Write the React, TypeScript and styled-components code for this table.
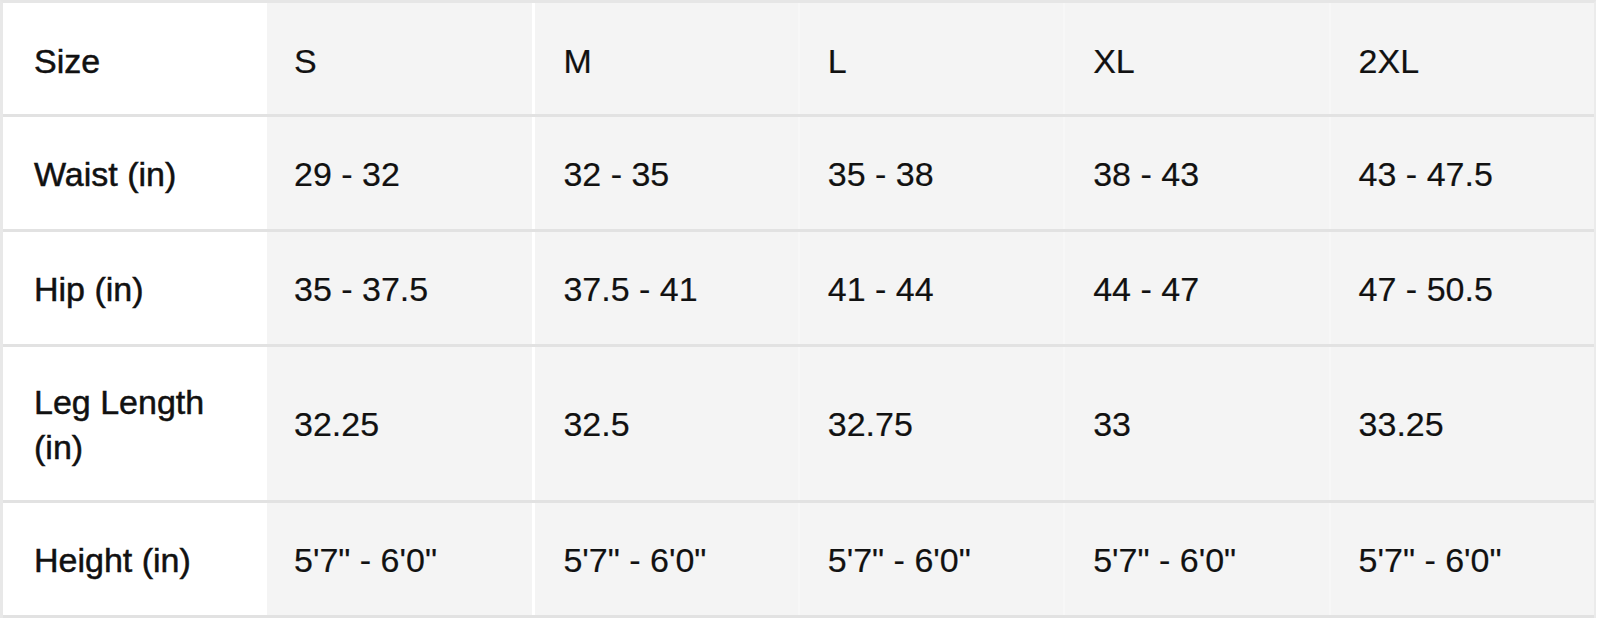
import styled, { createGlobalStyle } from "styled-components";

const GlobalStyle = createGlobalStyle`
  html, body {
    margin: 0;
    padding: 0;
    background: #ffffff;
  }
  body {
    font-family: "Liberation Sans", Arial, Helvetica, sans-serif;
    color: #111111;
  }
`;

const sizes = ["S", "M", "L", "XL", "2XL"];

const rows = [
  { label: "Waist (in)", height: 112, values: ["29 - 32", "32 - 35", "35 - 38", "38 - 43", "43 - 47.5"] },
  { label: "Hip (in)", height: 112, values: ["35 - 37.5", "37.5 - 41", "41 - 44", "44 - 47", "47 - 50.5"] },
  { label: "Leg Length (in)", height: 153, values: ["32.25", "32.5", "32.75", "33", "33.25"] },
  { label: "Height (in)", height: 112, values: [`5'7" - 6'0"`, `5'7" - 6'0"`, `5'7" - 6'0"`, `5'7" - 6'0"`, `5'7" - 6'0"`] },
];

export default function App() {
  return (
    <>
      <GlobalStyle />
      <Table>
        <Row $height={111} $shift={5}>
          <LabelCell>Size</LabelCell>
          {sizes.map((s, i) => (
            <DataCell key={s} $first={i === 0} $bright={i === 1}>
              {s}
            </DataCell>
          ))}
        </Row>
        {rows.map((row) => (
          <Row key={row.label} $height={row.height} $shift={2}>
            <LabelCell>{row.label}</LabelCell>
            {row.values.map((v, i) => (
              <DataCell key={i} $first={i === 0} $bright={i === 1}>
                {v}
              </DataCell>
            ))}
          </Row>
        ))}
      </Table>
    </>
  );
}

const Table = styled.div`
  width: 1596px;
  box-sizing: border-box;
  border-top: 3px solid #e6e6e6;
  border-left: 3px solid #e8e8e8;
  border-right: 2px solid #ebebeb;
  display: flex;
  flex-direction: column;
`;

const Row = styled.div<{ $height: number; $shift: number }>`
  display: grid;
  grid-template-columns: 264px repeat(5, 1fr);
  height: ${(p) => p.$height}px;
  border-bottom: 3px solid #e2e2e2;

  & > div {
    padding-top: ${(p) => p.$shift}px;
  }
`;

const LabelCell = styled.div`
  display: flex;
  align-items: center;
  box-sizing: border-box;
  background: #ffffff;
  padding: 0 40px 0 31px;
  font-size: 34px;
  line-height: 45px;
  -webkit-text-stroke: 0.5px #111111;
`;

const DataCell = styled.div<{ $first?: boolean; $bright?: boolean }>`
  display: flex;
  align-items: center;
  box-sizing: border-box;
  background: #f4f4f4;
  padding-left: ${(p) => (p.$first ? 27 : 28)}px;
  font-size: 34px;
  line-height: 45px;
  -webkit-text-stroke: 0.2px #111111;
  border-left: ${(p) =>
    p.$first ? "none" : p.$bright ? "3px solid #ffffff" : "2px solid #f7f7f7"};
`;
